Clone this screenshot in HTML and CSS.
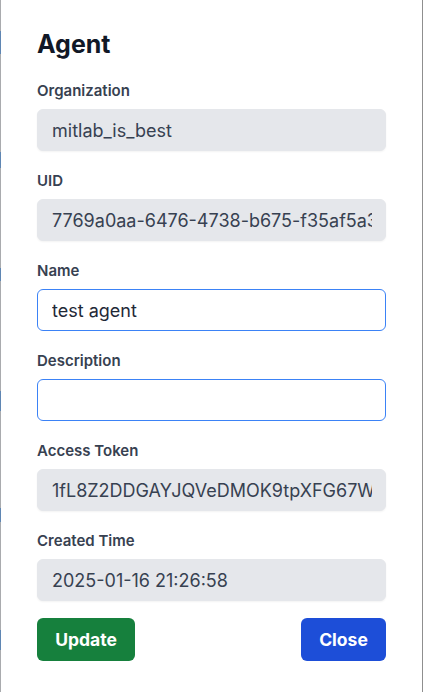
FILE: index.html
```html
<!DOCTYPE html>
<html>
<head>
<meta charset="utf-8">
<link rel="stylesheet" href="styles.css">
</head>
<body>
<div class="edge edge-left"></div>
<div class="panel">
  <h1 class="title">Agent</h1>
  <div class="field">
    <label class="label">Organization</label>
    <input class="input input-disabled" value="mitlab_is_best" readonly>
  </div>
  <div class="field">
    <label class="label">UID</label>
    <input class="input input-disabled" value="7769a0aa-6476-4738-b675-f35af5a3c9e1" readonly>
  </div>
  <div class="field">
    <label class="label">Name</label>
    <input class="input input-edit" value="test agent">
  </div>
  <div class="field">
    <label class="label">Description</label>
    <input class="input input-edit" value="">
  </div>
  <div class="field">
    <label class="label">Access Token</label>
    <input class="input input-disabled" value="1fL8Z2DDGAYJQVeDMOK9tpXFG67WqR3sT" readonly>
  </div>
  <div class="field">
    <label class="label">Created Time</label>
    <input class="input input-disabled" value="2025-01-16 21:26:58" readonly>
  </div>
  <div class="actions">
    <button class="btn btn-update">Update</button>
    <button class="btn btn-close">Close</button>
  </div>
</div>
<div class="edge edge-right"></div>
</body>
</html>
```
FILE: styles.css
```css
html, body {
  margin: 0;
  padding: 0;
  height: 692px;
  overflow: hidden;
}
body {
  display: flex;
  background: #a3a3a3;
  font-family: Inter, "Noto Sans", sans-serif;
}
.edge {
  width: 1px;
  flex: none;
}
.edge-left {
  background:
    linear-gradient(#a9abae 0 31px, #5f86b3 31px 54px, #a9abae 54px 152px,
      #5f86b3 152px 168px, #a9abae 168px 268px, #5f86b3 268px 281px,
      #a9abae 281px 391px, #5f86b3 391px 411px, #a9abae 411px 508px,
      #5f86b3 508px 522px, #a9abae 522px 630px, #5f86b3 630px 650px, #a9abae 650px);
}
.edge-right {
  background: #8f8f8f;
}
.panel {
  width: 421px;
  flex: none;
  box-sizing: border-box;
  background: #ffffff;
  padding: 28px 36px 0 36px;
}
.title {
  margin: 0 0 21px 0;
  font-size: 25px;
  line-height: 32px;
  font-weight: 700;
  color: #111827;
}
.field {
  display: flex;
  flex-direction: column;
  margin-bottom: 20px;
}
.label {
  font-size: 15px;
  line-height: 20px;
  font-weight: 600;
  color: #374151;
  margin-bottom: 8px;
}
.input {
  box-sizing: border-box;
  height: 42px;
  width: 349px;
  padding: 0 13px 0 14px;
  border-radius: 6px;
  font-family: Inter, "Noto Sans", sans-serif;
  font-size: 18px;
  color: #374151;
  outline: none;
}
.input-disabled {
  background: #e5e7eb;
  border: 1px solid #e5e7eb;
  box-shadow: 0 1px 2px rgba(0, 0, 0, 0.05);
}
.input-edit {
  background: #ffffff;
  border: 1px solid #3b82f6;
  color: #1f2937;
}
.actions {
  display: flex;
  justify-content: space-between;
  margin-top: -3px;
}
.btn {
  height: 43px;
  padding: 0;
  border: none;
  border-radius: 6px;
  color: #ffffff;
  font-family: Inter, "Noto Sans", sans-serif;
  font-size: 17.5px;
  font-weight: 700;
}
.btn-update {
  background: #16803d;
  width: 98px;
}
.btn-close {
  background: #1d4ed8;
  width: 85px;
}
```
